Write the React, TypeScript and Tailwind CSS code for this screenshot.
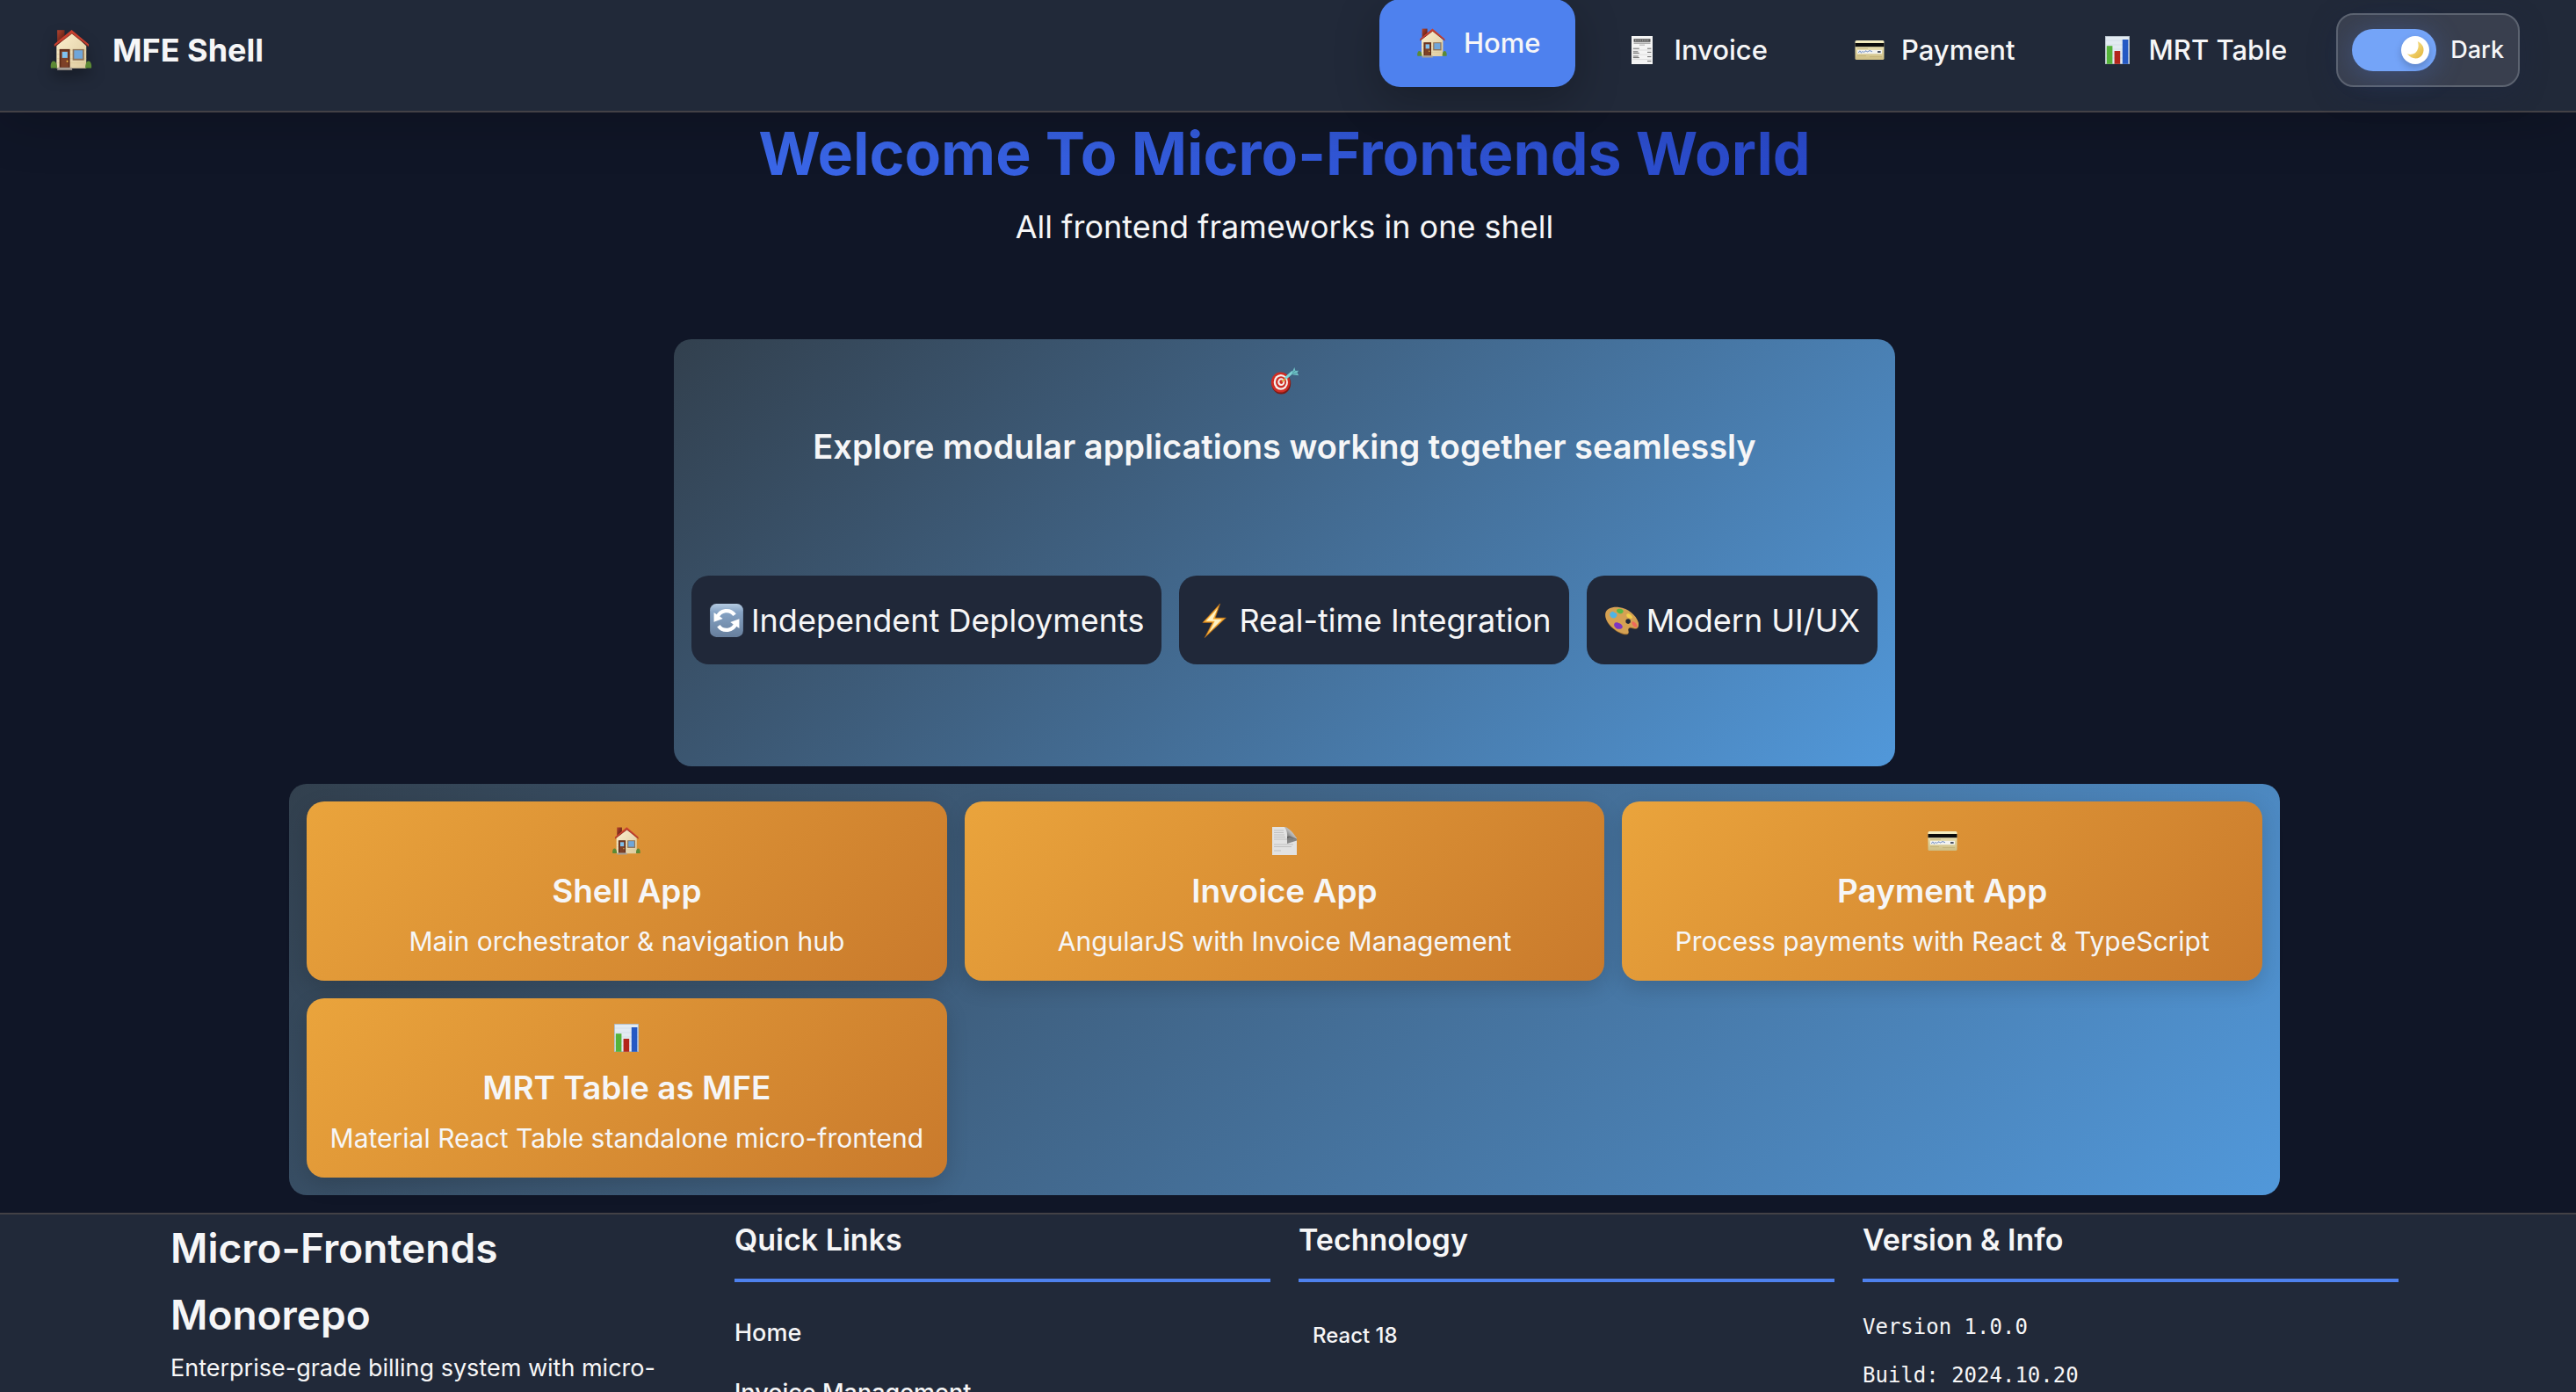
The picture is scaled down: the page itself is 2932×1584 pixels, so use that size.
import { useState, type ReactNode } from "react";

type IconProps = { className?: string };

function Svg({ className = "size-9", children }: IconProps & { children: ReactNode }) {
  return (
    <svg viewBox="0 0 36 36" className={`${className} shrink-0`} aria-hidden="true">
      {children}
    </svg>
  );
}

function HouseIcon({ className }: IconProps) {
  return (
    <Svg className={className}>
      <defs>
        <linearGradient id="wall" x1="0" y1="0" x2="1" y2="1">
          <stop offset="0" stopColor="#fdf0cf" />
          <stop offset="1" stopColor="#dccb9f" />
        </linearGradient>
        <linearGradient id="chimney" x1="0" y1="0" x2="1" y2="1">
          <stop offset="0" stopColor="#b5442f" />
          <stop offset="1" stopColor="#4c170f" />
        </linearGradient>
      </defs>
      <rect x="6.6" y="1.6" width="6" height="10" fill="url(#chimney)" />
      <path d="M6 14.5 18.6 3.2 30.4 14.5V33H6Z" fill="url(#wall)" />
      <path d="M6.4 18h24M6.4 21.5h24M6.4 25h24M6.4 28.5h24" stroke="#d9c590" strokeWidth=".4" />
      <path d="M4.2 13.2 18.4 1.4 32.4 13.2v2L18.6 4.4 4.2 15.2Z" fill="#c8402f" />
      <path d="M4.2 15.2 18.6 4.4 32.4 15.2" fill="none" stroke="#7c2318" strokeWidth=".6" />
      <rect x="8.4" y="17.2" width="8.6" height="15.4" fill="#5b2a18" />
      <rect x="9.6" y="18.4" width="6.2" height="13.6" fill="#7d4128" />
      <rect x="10.6" y="19.4" width="4.4" height="5" fill="#7fc1ee" />
      <circle cx="14.8" cy="27.2" r=".7" fill="#f3c14a" />
      <rect x="19.2" y="17.2" width="9.4" height="9.2" fill="#8f7458" />
      <rect x="20.4" y="18.2" width="7" height="6.8" fill="#6fa6da" />
      <path d="M1.4 32.8c-.5-2.6.2-5.6 2-5.8 1.8-.2 3 2 3.2 5.8ZM29.6 32.8c0-3.600 1-6 2.800-5.800 1.800.2 2.600 3.200 2.200 5.800Z" fill="#5c8a35" />
      <path d="M7.200 32.200h11.200l.6 2.200H6.400Z" fill="#a8a096" />
    </Svg>
  );
}

function ReceiptIcon({ className }: IconProps) {
  return (
    <Svg className={className}>
      <path d="M6 2h24v32H6Z" fill="#f4f4f4" />
      <path d="M8.500 5.200h19v3.600h-19Z" fill="#5a5a5a" />
      <path d="M10 6.400h16M10 7.600h16" stroke="#e8e8e8" strokeWidth=".4" strokeDasharray="1.600 1" />
      <path d="M8.500 10.200h19" stroke="#777" strokeWidth=".8" />
      <path d="M15 12.200h6" stroke="#9a9a9a" strokeWidth=".8" />
      <path d="M7.800 16.200h7M7.800 19.800h5.600M7.800 21.400h7M7.800 25h6M7.800 26.600h7" stroke="#6d6d6d" strokeWidth="1" />
      <path d="M24 16.200h4.400M24 20.400h4.400M24 25.600h4.400M24 30.600h4.400" stroke="#6d6d6d" strokeWidth="1" />
      <path d="M7 18h22M7 23.200h22M7 28.600h22" stroke="#c4c4c4" strokeWidth=".5" />
    </Svg>
  );
}

function CardIcon({ className }: IconProps) {
  return (
    <Svg className={className}>
      <defs>
        <linearGradient id="card" x1="0" y1="0" x2="0" y2="1">
          <stop offset="0" stopColor="#f6efc4" />
          <stop offset="1" stopColor="#cdbd83" />
        </linearGradient>
      </defs>
      <rect x="1.500" y="7" width="33" height="22" rx="1.600" fill="url(#card)" />
      <rect x="1.500" y="10" width="33" height="4.200" fill="#0c0c0c" />
      <rect x="4" y="17.800" width="28" height="4.400" fill="#f3f3ef" />
      <path d="M5.500 21c1-2.600 2-2.400 2.400-.6s1.800-1.600 2.600-.6 1.600.8 2.600-.6 1.800 1.800 3.200.4 2.200-1 4.600.2" fill="none" stroke="#4f74b8" strokeWidth=".9" />
      <rect x="27" y="19" width="3.600" height="2" fill="#4d5566" />
      <path d="M4 16.200h12M4 24.600h10M18 25.600h14" stroke="#b7a66b" strokeWidth=".6" />
    </Svg>
  );
}

function ChartIcon({ className }: IconProps) {
  return (
    <Svg className={className}>
      <rect x="4" y="2" width="28" height="32" fill="#e3ebf2" />
      <path d="M4 7h28M4 12h28M4 17h28M4 22h28M4 27h28" stroke="#ccd7e2" strokeWidth=".6" />
      <rect x="4.400" y="2.400" width="27.200" height="31.200" fill="none" stroke="#a9b4bf" strokeWidth=".8" />
      <rect x="5.800" y="13.200" width="6.600" height="20.600" fill="#54b33a" />
      <rect x="14.600" y="19" width="6.600" height="14.800" fill="#b3261b" />
      <rect x="23.800" y="6" width="6.600" height="27.800" fill="#2559c4" />
    </Svg>
  );
}

function MoonIcon({ className }: IconProps) {
  return (
    <Svg className={className}>
      <defs>
        <linearGradient id="moon" x1="0" y1="0" x2="1" y2="1">
          <stop offset="0" stopColor="#fdf0a6" />
          <stop offset="1" stopColor="#e2b236" />
        </linearGradient>
      </defs>
      <path d="M22 3c9.500 4 13 14 8.500 22S14 36 4 24.500c8 2.500 14.500 0 17.500-6S23.500 7 22 3Z" fill="url(#moon)" />
    </Svg>
  );
}

function TargetIcon({ className }: IconProps) {
  return (
    <Svg className={className}>
      <ellipse cx="14" cy="21.500" rx="11.600" ry="13" fill="#7b1a14" />
      <ellipse cx="13.400" cy="20.200" rx="11.400" ry="12.200" fill="#cf2d24" />
      <ellipse cx="13.600" cy="20" rx="8.600" ry="9.400" fill="#f6f1ee" />
      <ellipse cx="13.800" cy="19.900" rx="6.400" ry="7" fill="#cf2d24" />
      <ellipse cx="14" cy="19.800" rx="4.200" ry="4.600" fill="#f6f1ee" />
      <ellipse cx="14.200" cy="19.700" rx="2.200" ry="2.600" fill="#cf2d24" />
      <path d="m15 19.500 6-5.500" stroke="#d8a93a" strokeWidth="1.600" />
      <path d="m19 15.500 9-8" stroke="#7fd2d4" strokeWidth="3.400" />
      <path d="M26.500 9.500 30 2l1.200 4.400L35 6l-1.800 2.600L35.200 12l-6.800-1Z" fill="#6fc0c6" />
      <path d="m27 9.400 5-4M28 10l5-.6" stroke="#3b8790" strokeWidth=".7" />
    </Svg>
  );
}

function RefreshIcon({ className }: IconProps) {
  return (
    <Svg className={className}>
      <defs>
        <linearGradient id="refresh" x1="0" y1="0" x2="0" y2="1">
          <stop offset="0" stopColor="#b4cbe2" />
          <stop offset=".25" stopColor="#86a3c4" />
          <stop offset="1" stopColor="#677f9d" />
        </linearGradient>
      </defs>
      <rect x="1" y="1" width="34" height="34" rx="6.500" fill="url(#refresh)" />
      <path d="M8.600 14.800a10 10 0 0 1 17.600-2.400" fill="none" stroke="#fff" strokeWidth="3.800" />
      <path d="M27.400 21.200A10 10 0 0 1 9.800 23.600" fill="none" stroke="#fff" strokeWidth="3.800" />
      <path d="M5 10v9.600l9.200-3.400Z" fill="#fff" />
      <path d="M31 26v-9.600l-9.200 3.400Z" fill="#fff" />
    </Svg>
  );
}

function BoltIcon({ className }: IconProps) {
  return (
    <Svg className={className}>
      <path d="M24 .8 6.200 20.200h10L8.400 35.600 30 15.400H19Z" fill="#f5ab35" stroke="#a8641a" strokeWidth=".7" strokeLinejoin="round" />
      <path d="M21.600 5.500 9.600 18.600h9L13 30 26 16.900h-9.400Z" fill="#fff3c4" />
    </Svg>
  );
}

function PaletteIcon({ className }: IconProps) {
  return (
    <Svg className={className}>
      <path d="M1.200 11.500C2 6.600 8.500 4.400 15 5.200c9.500 1.200 17.500 8 19.800 15.300 1.200 4-.6 6.800-3.600 6.300-2.400-.4-3.800-1.600-5.600-.6-2.200 1.200-.4 3.400-.8 5-.6 1.900-4.200 1.700-7.800.2C8.800 28 .2 19.500 1.200 11.500Z" fill="#9a6a2c" />
      <path d="M1.200 10.700C2 5.800 8.500 3.600 15 4.400c9.500 1.200 17.500 8 19.800 15.300 1.200 4-.6 6.800-3.600 6.300-2.400-.4-3.800-1.600-5.600-.6-2.200 1.200-.4 3.400-.8 5-.6 1.900-4.200 1.700-7.800.2C8.800 27.200.2 18.700 1.200 10.700Z" fill="#d5a153" />
      <circle cx="24.400" cy="19" r="2.500" fill="#1f2737" />
      <path d="M6 10.500c1-1.200 2.600-2.600 3.600-1.200s3.400.8 3.400 3-2.400 3.700-4.400 3.300S4.800 12 6 10.500Z" fill="#4fb4e6" />
      <path d="M13 7c1.400-1.600 5.800-.8 6.400 1.200s-1.800 3.200-3.600 2.800S11.800 8.600 13 7Z" fill="#57b947" />
      <path d="M23.500 11.200c1.600-1 5 1.600 5.200 3.400s-2.400 1.600-4 .8-2.800-3.200-1.200-4.200Z" fill="#f2d04b" />
      <path d="M28.600 19.400c1.200-1 4.600 1.800 5 4s-1.800 1.800-3.200.8-3-3.800-1.800-4.800Z" fill="#ef6a5b" />
      <path d="M10.500 21c1.200-1.600 3.400-.6 5 0s4 2.600 3 4.400-4.600 1.800-6.400.6-2.800-3.400-1.600-5Z" fill="#7d35c2" />
    </Svg>
  );
}

function PageIcon({ className }: IconProps) {
  return (
    <Svg className={className}>
      <defs>
        <linearGradient id="curl" x1="0" y1="1" x2="1" y2="0">
          <stop offset="0" stopColor="#4a4a4a" />
          <stop offset=".5" stopColor="#b5b5b5" />
          <stop offset="1" stopColor="#f4f4f4" />
        </linearGradient>
      </defs>
      <path d="M4 2h14l14 13v19H4Z" fill="#e2e2e2" />
      <path d="M6 6h11M6 8.500h11M6 11h12M6 13.500h13M6 16h22M6 22h22M6 24.500h20M6 29h8" stroke="#c0c0c0" strokeWidth="1" />
      <path d="M18 2c2.800 3.500 3.600 8 3 13l3-1 8 2c-.4-2-3-6-6-9s-5.500-5-8-5Z" fill="url(#curl)" />
      <path d="m21 13 3-.5 8 3v2L21 21Z" fill="#4a4a4a" opacity=".6" />
    </Svg>
  );
}

const navItems = [
  { label: "Home", icon: <HouseIcon /> },
  { label: "Invoice", icon: <ReceiptIcon /> },
  { label: "Payment", icon: <CardIcon /> },
  { label: "MRT Table", icon: <ChartIcon /> },
];

const features = [
  { label: "Independent Deployments", icon: <RefreshIcon className="size-10" /> },
  { label: "Real-time Integration", icon: <BoltIcon className="size-10" /> },
  { label: "Modern UI/UX", icon: <PaletteIcon className="size-10" /> },
];

const apps = [
  { title: "Shell App", text: "Main orchestrator & navigation hub", icon: <HouseIcon className="size-[34px]" /> },
  { title: "Invoice App", text: "AngularJS with Invoice Management", icon: <PageIcon /> },
  { title: "Payment App", text: "Process payments with React & TypeScript", icon: <CardIcon /> },
  { title: "MRT Table as MFE", text: "Material React Table standalone micro-frontend", icon: <ChartIcon /> },
];

function Header() {
  const [active, setActive] = useState("Home");
  const [dark, setDark] = useState(true);
  return (
    <header className="relative z-10 flex items-center justify-between border-b-2 border-[#434146] bg-[#212939] pt-[7px] pr-16 pb-[19px] pl-14 shadow-[0_8px_64px_rgba(0,0,0,0.2)]">
      <a href="#home" className="flex items-center gap-[22px] text-[36px] leading-[100px] font-bold">
        <HouseIcon className="size-[50px] drop-shadow-[0_8px_8px_rgba(0,0,0,0.3)]" />
        MFE Shell
      </a>
      <div className="flex items-center gap-4">
        <nav className="flex gap-4">
          {navItems.map(({ label, icon }) => (
            <a
              key={label}
              href="#home"
              onClick={() => setActive(label)}
              className={
                label === active
                  ? "flex h-[100px] -translate-y-2 items-center gap-4 rounded-3xl bg-[#4e81ee] px-10 text-[31px] font-medium shadow-[0_16px_50px_rgba(0,0,0,0.25)]"
                  : "flex h-[100px] items-center gap-4 rounded-3xl px-10 text-[31px] font-medium"
              }
            >
              <span className="flex w-10 justify-center">{icon}</span>
              {label}
            </a>
          ))}
        </nav>
        <button
          type="button"
          role="switch"
          aria-checked={dark}
          onClick={() => setDark(!dark)}
          className="flex items-center gap-4 rounded-[20px] border-2 border-[#5c6370] bg-[#393f4e] p-4 text-[27px] font-medium shadow-[0_8px_32px_rgba(30,41,70,0.3)]"
        >
          <span className="flex h-12 w-24 items-center justify-end rounded-full bg-[#74a4f8] px-2 shadow-[0_4px_32px_rgba(78,129,238,0.3)]">
            <span className="flex size-8 items-center justify-center rounded-full bg-white shadow-[0_4px_8px_rgba(0,0,0,0.2)]">
              <MoonIcon className="size-6" />
            </span>
          </span>
          Dark
        </button>
      </div>
    </header>
  );
}

function Hero() {
  return (
    <section className="mx-auto mt-[90px] w-fit rounded-[20px] bg-linear-135 from-[#32404e] to-[#5198da] p-5">
      <div className="flex h-[54px] items-center justify-center">
        <TargetIcon className="size-[34px]" />
      </div>
      <h2 className="text-center text-[38px] leading-[96px] font-semibold">
        Explore modular applications working together seamlessly
      </h2>
      <ul className="flex justify-center gap-5 pt-[99px] pb-24">
        {features.map(({ label, icon }) => (
          <li key={label} className="flex h-[101px] items-center gap-2 rounded-[20px] bg-[#202839] px-5 text-[36px]">
            {icon}
            {label}
          </li>
        ))}
      </ul>
    </section>
  );
}

function Apps() {
  return (
    <section className="mx-auto my-5 grid max-w-[2266px] grid-cols-3 gap-5 rounded-[20px] bg-linear-135 from-[#32404e] to-[#5198da] p-5">
      {apps.map(({ title, text, icon }) => (
        <article
          key={title}
          className="rounded-[20px] bg-linear-135 from-[#eaa43c] to-[#c97a2c] p-5 text-center shadow-[0_8px_24px_rgba(0,0,0,0.15)]"
        >
          <div className="flex h-[50px] items-center justify-center">{icon}</div>
          <h3 className="text-[37px] leading-[64px] font-semibold">{title}</h3>
          <p className="text-[30px] leading-[50px] whitespace-nowrap">{text}</p>
        </article>
      ))}
    </section>
  );
}

function ColumnTitle({ children }: { children: ReactNode }) {
  return (
    <h3 className="mb-6 border-b-4 border-[#4e81ee] pb-[15px] text-[34px] leading-[58px] font-semibold">{children}</h3>
  );
}

function Footer() {
  return (
    <footer className="border-t-2 border-[#434146] bg-[#212939] pr-2 pb-16">
      <div className="mx-auto grid max-w-[2536px] grid-cols-4 gap-8">
        <div>
          <h2 className="w-min text-[46px] leading-[76px] font-semibold">
            <span className="whitespace-nowrap">Micro-Frontends</span> Monorepo
          </h2>
          <p className="text-[27px] leading-[46px]">Enterprise-grade billing system with micro-</p>
        </div>
        <nav>
          <ColumnTitle>Quick Links</ColumnTitle>
          <ul className="text-[27px] leading-[68px] font-medium">
            <li>
              <a href="#home">Home</a>
            </li>
            <li>
              <a href="#invoice">Invoice Management</a>
            </li>
          </ul>
        </nav>
        <div>
          <ColumnTitle>Technology</ColumnTitle>
          <p className="px-4 text-[24px] leading-[74px] font-medium">React 18</p>
        </div>
        <div>
          <ColumnTitle>Version &amp; Info</ColumnTitle>
          <p className="font-['DejaVu_Sans_Mono',monospace] text-[24px] leading-[55px]">
            Version 1.0.0
            <br />
            Build: 2024.10.20
          </p>
        </div>
      </div>
    </footer>
  );
}

export default function App() {
  return (
    <div className="h-screen overflow-hidden bg-[#101627] font-['Inter',sans-serif] text-[#f6f6f7]">
      <Header />
      <main className="pr-2">
        <h1 className="mx-auto w-fit bg-linear-135 from-[#3b68ea] to-[#2948c8] bg-clip-text text-[68px] leading-[92px] font-bold text-transparent">
          Welcome To Micro-Frontends World
        </h1>
        <p className="text-center text-[36px] leading-[76px]">All frontend frameworks in one shell</p>
        <Hero />
        <Apps />
      </main>
      <Footer />
    </div>
  );
}
